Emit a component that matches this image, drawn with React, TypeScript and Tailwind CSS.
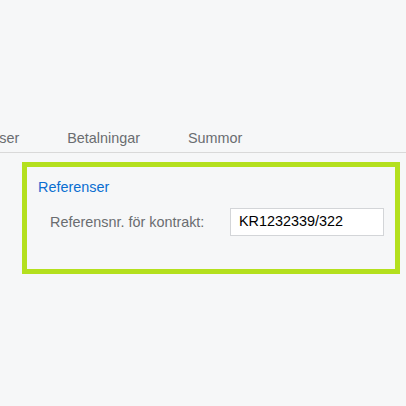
export default function App() {
  const tabs = ["Referenser", "Betalningar", "Summor"];
  return (
    <div
      className="w-[406px] h-[406px] overflow-hidden bg-[#f6f7f8] text-[14.4px]"
      style={{ fontFamily: '"Liberation Sans", Arial, sans-serif' }}
    >
      {/* Tab bar */}
      <div className="mt-[126px] border-b border-[#d9d9d9] flex h-[27px] overflow-hidden">
        <div className="flex ml-[-76px]">
          {tabs.map(t => (
            <div key={t} className="px-6 pt-[4px] leading-[16px] text-[#6a6d70] whitespace-nowrap">
              {t}
            </div>
          ))}
        </div>
      </div>

      {/* Highlighted section */}
      <div className="ml-[22px] mt-[9px] w-[378px] h-[112px] border-[5px] border-[#b4e01e] pl-[11px] pt-[12px]">
        <div className="text-[#0a6ed1] leading-[16px]">Referenser</div>
        <div className="flex items-center mt-[13px] pl-[12px]">
          <span className="text-[#6a6d70] w-[180px] leading-[16px]">Referensnr. för kontrakt:</span>
          <div className="w-[154px] h-[28px] bg-white border border-[#d3d5d8] flex items-center pl-[8px] text-black">
            KR1232339/322
          </div>
        </div>
      </div>
    </div>
  );
}
